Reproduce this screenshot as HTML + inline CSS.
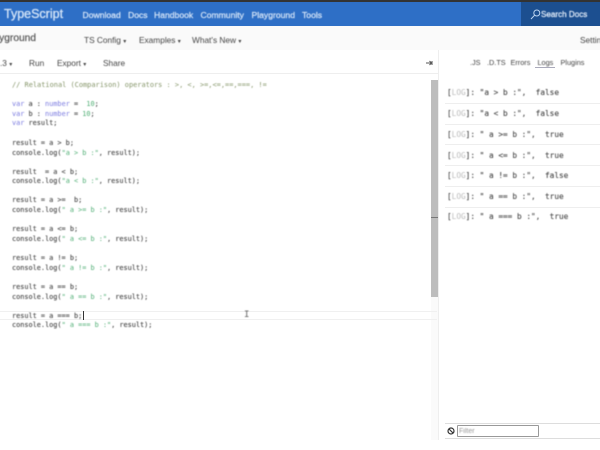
<!DOCTYPE html>
<html>
<head>
<meta charset="utf-8">
<style>
html,body{margin:0;padding:0;background:#fff;}
#p{position:relative;width:600px;height:450px;overflow:hidden;background:#fff;font-family:"Liberation Sans",sans-serif;}
.a{position:absolute;white-space:pre;}
.t{filter:blur(.45px);}
.n{font-size:8.6px;-webkit-text-stroke:.25px #d4e4f7;color:#d4e4f7;top:9px;line-height:12px;}
.s{font-size:8.3px;color:#444;line-height:12px;}
.c{font-family:"DejaVu Sans Mono",monospace;font-size:6.87px;line-height:10px;color:#444;left:12px;-webkit-text-stroke:.1px #444;}
.k{color:#7a7ae0;-webkit-text-stroke:0}.g{color:#4fae74;-webkit-text-stroke:0}.m{color:#86966a;-webkit-text-stroke:0}
.l{font-family:"DejaVu Sans Mono",monospace;font-size:7.75px;line-height:10px;color:#444;left:447px;-webkit-text-stroke:.1px #444;}
.d{color:#bbb;-webkit-text-stroke:0}
.h{position:absolute;left:445px;width:155px;height:1px;background:#eee;}
</style>
</head>
<body>
<div id="p">
<div class="a" style="left:0;top:0;width:600px;height:2px;background:#333"></div>
<div class="a" style="left:0;top:2px;width:600px;height:24px;background:#2e6fc6"></div>
<div class="a" style="left:521px;top:2px;width:79px;height:24px;background:#1c4f90"></div>
<div class="a" style="left:0;top:26px;width:600px;height:24px;background:#fafafa"></div>
<div class="a" style="left:0;top:73px;width:439px;height:1px;background:#eee"></div>

<div class="a t" style="left:4px;top:6px;font-size:12.5px;-webkit-text-stroke:.3px #d6e6f8;color:#d6e6f8;line-height:16px">TypeScript</div>
<div class="a t n" style="left:82.5px">Download</div>
<div class="a t n" style="left:128px">Docs</div>
<div class="a t n" style="left:154px">Handbook</div>
<div class="a t n" style="left:200.5px">Community</div>
<div class="a t n" style="left:251.5px">Playground</div>
<div class="a t n" style="left:302px">Tools</div>
<svg class="a" style="left:530px;top:9px" width="11" height="11" viewBox="0 0 11 11"><circle cx="6.8" cy="4" r="3" fill="none" stroke="#bcd4f0" stroke-width="1"/><path d="M4.6 6.2L1 10" stroke="#bcd4f0" stroke-width="1"/></svg>
<div class="a t n" style="left:541px;font-size:8.1px;color:#e4eefa;-webkit-text-stroke:.25px #e4eefa">Search Docs</div>

<div class="a t" style="left:-6.5px;top:33px;font-size:10.2px;-webkit-text-stroke:.2px #555;color:#555;line-height:12px">ayground</div>
<div class="a t s" style="left:84px;top:33.5px">TS Config <span style="font-size:6px">▾</span></div>
<div class="a t s" style="left:139px;top:33.5px">Examples <span style="font-size:6px">▾</span></div>
<div class="a t s" style="left:192px;top:33.5px">What's New <span style="font-size:6px">▾</span></div>
<div class="a t s" style="left:580px;top:33.5px">Settings</div>

<div class="a t s" style="left:0;top:57px">.3 <span style="font-size:6px">▾</span></div>
<div class="a t s" style="left:29px;top:57px">Run</div>
<div class="a t s" style="left:57px;top:57px">Export <span style="font-size:6px">▾</span></div>
<div class="a t s" style="left:103px;top:57px">Share</div>
<svg class="a" style="left:426px;top:60px" width="7" height="6" viewBox="0 0 7 6"><path d="M0 3H5M3.5 1L5.5 3L3.5 5M6 1V5" stroke="#555" stroke-width="1" fill="none"/></svg>

<div class="a" style="left:438px;top:50px;width:1px;height:390px;background:#eee"></div>
<div class="a" style="left:431px;top:80px;width:7px;height:217px;background:#bdbdbd"></div>
<div class="a" style="left:431px;top:297px;width:7px;height:143px;background:#fafafa"></div>
<div class="a" style="left:431px;top:217px;width:7px;height:1px;background:#777"></div>
<div class="a" style="left:0;top:311px;width:437px;height:1px;background:#f0f0f0"></div>
<div class="a" style="left:0;top:319px;width:437px;height:1px;background:#f0f0f0"></div>
<div class="a" style="left:83px;top:311px;width:1px;height:9px;background:#333"></div>
<div class="a t" style="left:244px;top:310px;font-family:'DejaVu Sans Mono',monospace;font-size:9px;line-height:10px;color:#666">I</div>

<div class="t">
<div class="a c" style="top:80px;left:12px;font-size:6.95px"><span class="m">// Relational (Comparison) operators : &gt;, &lt;, &gt;=,&lt;=,==,===, !=</span></div>
<div class="a c" style="top:99px"><span class="k">var</span> a : <span class="k">number</span> =  <span class="g">10</span>;</div>
<div class="a c" style="top:109px"><span class="k">var</span> b : <span class="k">number</span> = <span class="g">10</span>;</div>
<div class="a c" style="top:118px"><span class="k">var</span> result;</div>
<div class="a c" style="top:138px">result = a &gt; b;</div>
<div class="a c" style="top:147.5px">console.log(<span class="g">"a &gt; b :"</span>, result);</div>
<div class="a c" style="top:166.5px">result  = a &lt; b;</div>
<div class="a c" style="top:176px">console.log(<span class="g">"a &lt; b :"</span>, result);</div>
<div class="a c" style="top:195px">result = a &gt;=  b;</div>
<div class="a c" style="top:205px">console.log(<span class="g">" a &gt;= b :"</span>, result);</div>
<div class="a c" style="top:224px">result = a &lt;= b;</div>
<div class="a c" style="top:233.5px">console.log(<span class="g">" a &lt;= b :"</span>, result);</div>
<div class="a c" style="top:253px">result = a != b;</div>
<div class="a c" style="top:262.5px">console.log(<span class="g">" a != b :"</span>, result);</div>
<div class="a c" style="top:282px">result = a == b;</div>
<div class="a c" style="top:291.5px">console.log(<span class="g">" a == b :"</span>, result);</div>
<div class="a c" style="top:311px">result = a === b;</div>
<div class="a c" style="top:320px">console.log(<span class="g">" a === b :"</span>, result);</div>
</div>

<div class="a t s" style="left:470px;top:57px;font-size:7.3px">.JS</div>
<div class="a t s" style="left:487px;top:57px;font-size:7.3px">.D.TS</div>
<div class="a t s" style="left:510.5px;top:57px;font-size:7.3px">Errors</div>
<div class="a t s" style="left:537.5px;top:57px;font-size:7.3px">Logs</div>
<div class="a" style="left:535px;top:67px;width:20px;height:1px;background:#aab"></div>
<div class="a t s" style="left:560.5px;top:57px;font-size:7.3px">Plugins</div>

<div class="t">
<div class="a l" style="top:88px">[<span class="d">LOG</span>]: "a &gt; b :",  false</div>
<div class="a l" style="top:109px">[<span class="d">LOG</span>]: "a &lt; b :",  false</div>
<div class="a l" style="top:129.5px">[<span class="d">LOG</span>]: " a &gt;= b :",  true</div>
<div class="a l" style="top:150.5px">[<span class="d">LOG</span>]: " a &lt;= b :",  true</div>
<div class="a l" style="top:171px">[<span class="d">LOG</span>]: " a != b :",  false</div>
<div class="a l" style="top:192px">[<span class="d">LOG</span>]: " a == b :",  true</div>
<div class="a l" style="top:212px">[<span class="d">LOG</span>]: " a === b :",  true</div>
</div>
<div class="h" style="top:103px"></div>
<div class="h" style="top:124px"></div>
<div class="h" style="top:144px"></div>
<div class="h" style="top:165px"></div>
<div class="h" style="top:186px"></div>
<div class="h" style="top:207px"></div>

<div class="h" style="top:423px;background:#ddd"></div>
<div class="h" style="top:438px;background:#ddd"></div>
<svg class="a" style="left:447px;top:427px" width="8" height="8" viewBox="0 0 8 8"><circle cx="4" cy="4" r="3" fill="none" stroke="#333" stroke-width="1.2"/><path d="M2 2L6 6" stroke="#333" stroke-width="1.2"/></svg>
<div class="a" style="left:457px;top:425px;width:80px;height:10px;border:1px solid #999;border-radius:1px;background:#fff"></div>
<div class="a t" style="left:459px;top:426px;font-size:7px;line-height:11px;color:#999">Filter</div>
</div>
</body>
</html>
